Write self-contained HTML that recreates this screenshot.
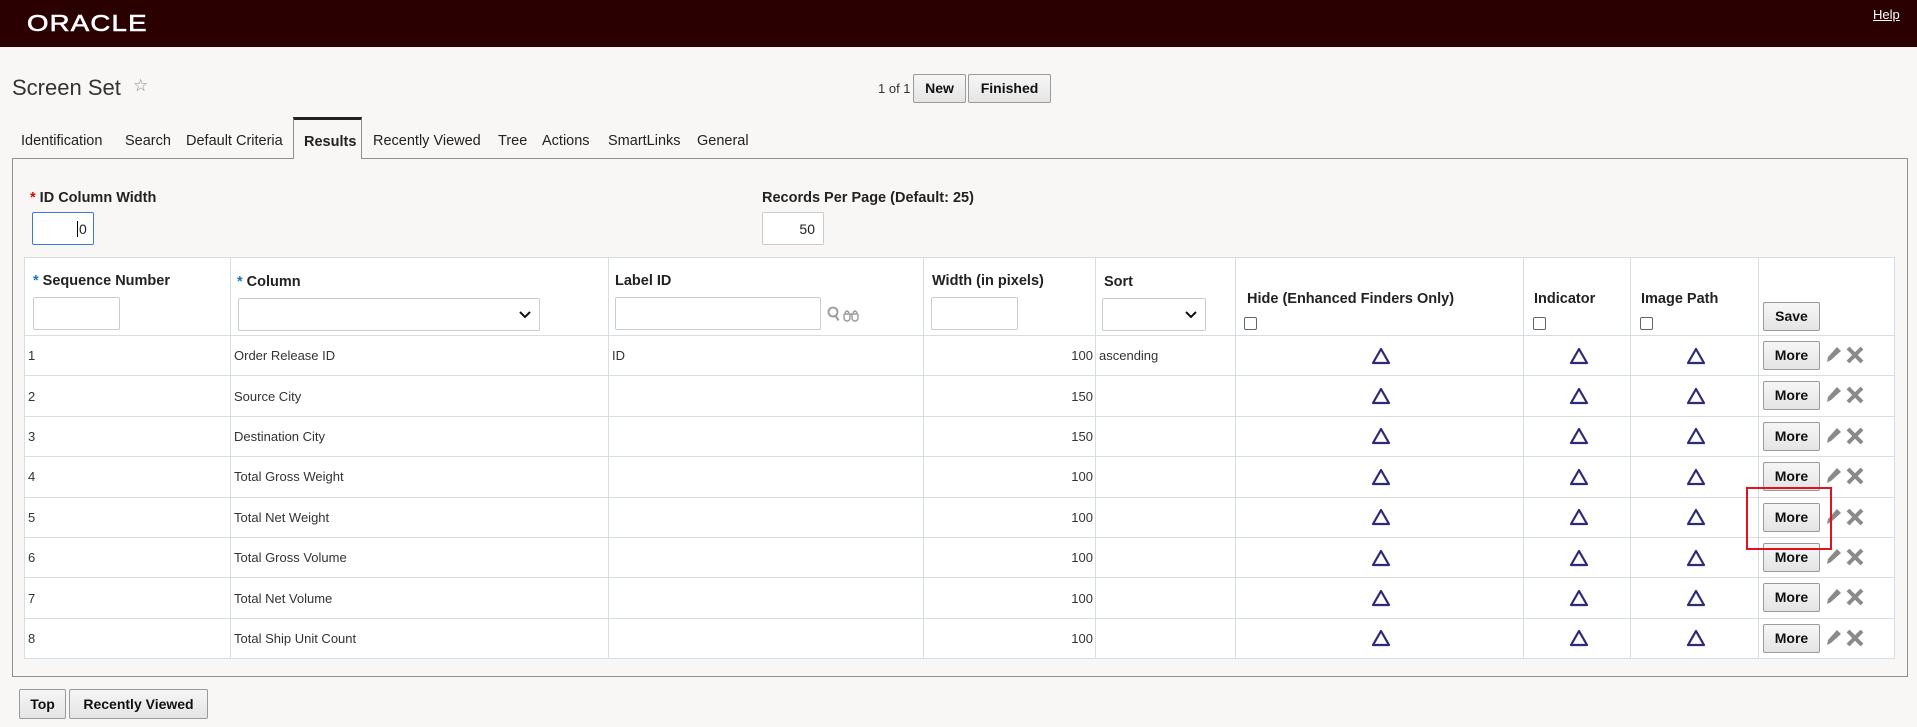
<!DOCTYPE html>
<html><head><meta charset="utf-8">
<style>
*{box-sizing:border-box;margin:0;padding:0}
body{width:1917px;height:727px;background:#f8f7f6;font-family:"Liberation Sans",sans-serif;position:relative;overflow:hidden;color:#222}
.hdr{position:absolute;left:0;top:0;width:1917px;height:47px;background:#2a0001}
.logo{position:absolute;left:27px;top:10px;color:#fff;font-size:23px;font-weight:normal;letter-spacing:1px;transform:scaleX(1.2);transform-origin:left;-webkit-text-stroke:0.6px #fff}
.help{position:absolute;left:1873px;top:7px;color:#fff;font-size:13px;text-decoration:underline}
.abs{position:absolute}
.btn{position:absolute;background:linear-gradient(#f6f6f6,#e4e4e4);border:1px solid #9a9a9a;border-radius:2px;font-weight:bold;font-size:14px;color:#111;text-align:center}
.tab{position:absolute;top:133px;font-size:14.5px;color:#222}
.panel{position:absolute;left:12px;top:158px;width:1896px;height:519px;border:1px solid #8f8f8f}
.inp{position:absolute;background:#fff;border:1px solid #ccc;border-radius:2px}
.lbl{position:absolute;font-weight:bold;font-size:14.5px;color:#222;white-space:nowrap}
.star{color:#1a73c8}
.rstar{color:#d00}
table{position:absolute;left:24px;top:257px;border-collapse:collapse;background:#fff;table-layout:fixed}
td{border:1px solid #d5dde5;font-size:13px;color:#333;position:relative;vertical-align:middle;padding-left:3px;height:40.4px}
tr.h td{height:78px}
.cb{position:absolute;width:13px;height:13px;border:1px solid #666;border-radius:2px;background:#fff}
.tri{display:block;margin:0 auto}
.more{position:absolute;left:4px;top:5px;width:57px;height:29px;line-height:27px}
.ic{position:absolute;top:9px}
</style></head><body>
<div class="hdr"><div class="logo">ORACLE</div><div class="help">Help</div></div>
<div class="abs" style="left:12px;top:75px;font-size:22px;color:#333">Screen Set</div>
<div class="abs" style="left:133px;top:76px;font-size:17px;color:#888">☆</div>
<div class="abs" style="left:878px;top:81px;font-size:13px;color:#333">1 of 1</div>
<div class="btn" style="left:913px;top:74px;width:53px;height:29px;line-height:27px">New</div>
<div class="btn" style="left:968px;top:74px;width:83px;height:29px;line-height:27px">Finished</div>

<div class="panel"></div>
<div class="abs" style="left:293px;top:117px;width:69px;height:42px;background:#f8f7f6;border:1px solid #8f8f8f;border-top:3px solid #222;border-bottom:none"></div>
<div class="tab" style="left:21px">Identification</div>
<div class="tab" style="left:125px">Search</div>
<div class="tab" style="left:186px">Default Criteria</div>
<div class="tab" style="left:304px;font-weight:bold;top:134px">Results</div>
<div class="tab" style="left:373px">Recently Viewed</div>
<div class="tab" style="left:498px">Tree</div>
<div class="tab" style="left:542px">Actions</div>
<div class="tab" style="left:608px">SmartLinks</div>
<div class="tab" style="left:697px">General</div>

<div class="lbl" style="left:30px;top:190px"><span class="rstar">*</span> ID Column Width</div>
<div class="inp" style="left:32px;top:212px;width:62px;height:33px;border:1px solid #3a7bd5"><span class="abs" style="left:44px;top:8px;font-size:14px;border-left:1px solid #000;padding-left:1px">0</span></div>
<div class="lbl" style="left:762px;top:190px">Records Per Page (Default: 25)</div>
<div class="inp" style="left:762px;top:212px;width:62px;height:33px"><span class="abs" style="right:8px;top:8px;font-size:14px">50</span></div>

<table>
<colgroup><col style="width:206px"><col style="width:378px"><col style="width:315px"><col style="width:172px"><col style="width:140px"><col style="width:288px"><col style="width:107px"><col style="width:128px"><col style="width:136px"></colgroup>
<tr class="h">
<td><div class="lbl" style="left:8px;top:15px"><span class="star">*</span> Sequence Number</div><div class="inp" style="left:8px;top:39px;width:87px;height:33px"></div></td>
<td><div class="lbl" style="left:6px;top:16px"><span class="star">*</span> Column</div><div class="inp" style="left:7px;top:40px;width:302px;height:33px"><svg class="abs" style="right:8px;top:12px" width="12" height="8"><path d="M1 1l5 5 5-5" stroke="#111" stroke-width="2" fill="none"/></svg></div></td>
<td><div class="lbl" style="left:6px;top:15px">Label ID</div><div class="inp" style="left:6px;top:39px;width:206px;height:33px"></div>
<svg class="abs" style="left:218px;top:48px" width="40" height="18"><circle cx="6" cy="6" r="4.5" stroke="#999" stroke-width="1.8" fill="none"/><path d="M8.5 9.5l3 5" stroke="#999" stroke-width="2"/><path d="M18 7q2-4 4 0M26 7q2-4 4 0M17 8h14M17 8v4a3 3 0 0 0 6 0v-4M25 8v4a3 3 0 0 0 6 0v-4" stroke="#999" stroke-width="1.4" fill="none"/></svg></td>
<td><div class="lbl" style="left:8px;top:15px">Width (in pixels)</div><div class="inp" style="left:7px;top:39px;width:87px;height:33px"></div></td>
<td><div class="lbl" style="left:8px;top:16px">Sort</div><div class="inp" style="left:6px;top:40px;width:104px;height:33px"><svg class="abs" style="right:8px;top:12px" width="12" height="8"><path d="M1 1l5 5 5-5" stroke="#111" stroke-width="2" fill="none"/></svg></div></td>
<td><div class="lbl" style="left:11px;top:33px">Hide (Enhanced Finders Only)</div><div class="cb" style="left:8px;top:59px"></div></td>
<td><div class="lbl" style="left:10px;top:33px">Indicator</div><div class="cb" style="left:9px;top:59px"></div></td>
<td><div class="lbl" style="left:10px;top:33px">Image Path</div><div class="cb" style="left:9px;top:59px"></div></td>
<td><div class="btn" style="left:4px;top:44px;width:57px;height:29px;line-height:27px">Save</div></td>
</tr>
</table>
<script>
var rows=[["1","Order Release ID","ID","100","ascending"],["2","Source City","","150",""],["3","Destination City","","150",""],["4","Total Gross Weight","","100",""],["5","Total Net Weight","","100",""],["6","Total Gross Volume","","100",""],["7","Total Net Volume","","100",""],["8","Total Ship Unit Count","","100",""]];
var tri='<svg class="tri" width="20" height="18"><path d="M10 2L2 16H18Z" stroke="#2e2a78" stroke-width="2.2" fill="none" stroke-linejoin="round"/></svg>';
var pen='<svg class="ic" style="left:65px" width="18" height="20"><path d="M3 17l1-5 9-10 4 4-10 9z" fill="#8a8a8a"/></svg>';
var x='<svg class="ic" style="left:87px;top:10px" width="18" height="18"><path d="M2 2l14 14M16 2L2 16" stroke="#8a8a8a" stroke-width="4"/></svg>';
var h='';rows.forEach(function(r){h+='<tr><td>'+r[0]+'</td><td>'+r[1]+'</td><td>'+r[2]+'</td><td style="text-align:right;padding-right:2px">'+r[3]+'</td><td>'+r[4]+'</td><td>'+tri+'</td><td>'+tri+'</td><td>'+tri+'</td><td><div class="btn more">More</div>'+pen+x+'</td></tr>';});
document.querySelector('table').insertAdjacentHTML('beforeend',h);
</script>
<div class="abs" style="left:1746px;top:487px;width:86px;height:63px;border:2px solid #e0141c"></div>
<div class="btn" style="left:19px;top:689px;width:47px;height:30px;line-height:28px">Top</div>
<div class="btn" style="left:69px;top:689px;width:139px;height:30px;line-height:28px">Recently Viewed</div>
</body></html>
